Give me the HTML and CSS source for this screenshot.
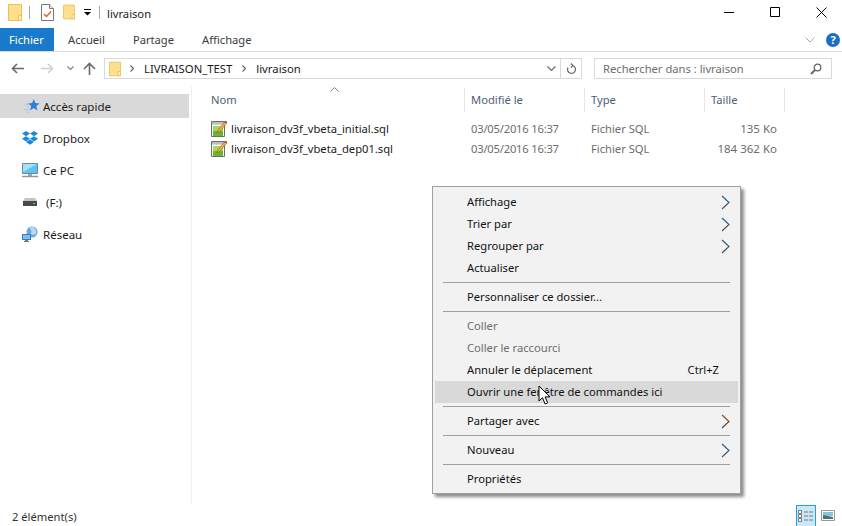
FILE: index.html
```html
<!DOCTYPE html>
<html lang="fr">
<head>
    <meta charset="UTF-8">
    <title>livraison</title>
    <link rel="stylesheet" href="styles.css">
</head>
<body>

<svg class="defs" width="0" height="0">
    <symbol id="folder" viewBox="0 0 14 17">
        <path d="M.5.5h13v16H.5z" fill="#fce08f" stroke="#e9c24f"/>
        <path d="M10.5 11.5h3v5h-3z" fill="#fdeeb8" stroke="#e9c24f"/>
    </symbol>
    <symbol id="sqlfile" viewBox="0 0 17 17">
        <path d="M.5 1.5h13v15H.5z" fill="#fff" stroke="#6d6d6d"/>
        <path d="M1 2h12v3H1z" fill="#d4d4d4"/>
        <path d="M2 2v2M4 2v2M6 2v2M8 2v2M10 2v2M12 2v2" stroke="#8a8a8a" stroke-width=".6"/>
        <path d="M2 6h10v10H2z" fill="#a6d65c"/>
        <path d="M2 11h10v5H2z" fill="#6cb52f"/>
        <path d="M6 13l1-3 6.500-8 2 1.200-6.500 8z" fill="#f2b632" stroke="#8a5a14" stroke-width=".6"/>
        <path d="M13.500 2l2 1.200.8-1.200-1.800-1.200z" fill="#b03020"/>
    </symbol>
    <symbol id="chev" viewBox="0 0 9 15">
        <path d="M1 1l7 6.500-7 6.500" fill="none" stroke="#3f5060" stroke-width="1.100"/>
        <path d="M2 1.500l6 6" fill="none" stroke="#2f86d8" stroke-width=".8"/>
    </symbol>
    <symbol id="chevor" viewBox="0 0 9 15">
        <path d="M1 1l7 6.500-7 6.500" fill="none" stroke="#4a4a4a" stroke-width="1.100"/>
        <path d="M2 1.500l6 6" fill="none" stroke="#d9701c" stroke-width=".9"/>
    </symbol>
</svg>

<div class="window">

    <!-- barre de titre -->
    <div class="titlebar">
        <svg class="qa-folder" width="14" height="17"><use href="#folder"/></svg>
        <i class="qa-sep"></i>
        <svg class="qa-doc" width="13" height="17" viewBox="0 0 13 17">
            <path d="M.5.5h8l4 4v12H.5z" fill="#fff" stroke="#777"/>
            <path d="M8.500.5v4h4" fill="#eee" stroke="#777"/>
            <path d="M3 10l2.500 2.500L10 7.500" fill="none" stroke="#e8622c" stroke-width="1.500"/>
        </svg>
        <svg class="qa-folder2" width="12" height="16"><use href="#folder"/></svg>
        <svg class="qa-drop" width="8" height="7" viewBox="0 0 8 7">
            <path d="M0 .5h7" stroke="#000"/>
            <path d="M0 3h7L3.500 6.500z" fill="#000"/>
        </svg>
        <i class="qa-sep qa-sep-2"></i>
        <span class="title-text">livraison</span>
        <div class="winbtns">
            <svg width="11" height="11" viewBox="0 0 11 11"><path d="M0 5.500h10" stroke="#000"/></svg>
            <svg width="11" height="11" viewBox="0 0 11 11"><path d="M.5.500h9v9h-9z" fill="none" stroke="#000"/></svg>
            <svg width="11" height="11" viewBox="0 0 11 11"><path d="M.5.500l10 10M10.500.500l-10 10" stroke="#000"/></svg>
        </div>
    </div>

    <!-- ruban -->
    <div class="ribbon">
        <span class="tab tab-file">Fichier</span>
        <span class="tab">Accueil</span>
        <span class="tab">Partage</span>
        <span class="tab">Affichage</span>
        <div class="ribbon-right">
            <svg width="10" height="6" viewBox="0 0 10 6"><path d="M.5.500l4.500 4.500 4.500-4.500" fill="none" stroke="#a8a8a8"/></svg>
            <span class="help">?</span>
        </div>
    </div>

    <!-- navigation -->
    <div class="navbar">
        <svg class="nav-back" width="13" height="11" viewBox="0 0 13 11"><path d="M13 5.500H2M6 1L1.500 5.500 6 10" fill="none" stroke="#6a6a6a" stroke-width="1.600"/></svg>
        <svg class="nav-fwd" width="13" height="11" viewBox="0 0 13 11"><path d="M0 5.500h11M7 1l4.500 4.500L7 10" fill="none" stroke="#cfcfcf" stroke-width="1.600"/></svg>
        <svg class="nav-down" width="7" height="5" viewBox="0 0 7 5"><path d="M.5.500l3 3 3-3" fill="none" stroke="#808080" stroke-width="1.200"/></svg>
        <svg class="nav-up" width="13" height="13" viewBox="0 0 13 13"><path d="M6.500 13V2M1 7l5.500-5.500L12 7" fill="none" stroke="#6a6a6a" stroke-width="1.600"/></svg>
        <div class="address">
            <svg class="addr-folder" width="12" height="16"><use href="#folder"/></svg>
            <svg class="crumb-arrow" width="5" height="7" viewBox="0 0 5 7"><path d="M.5.500l3 3-3 3" fill="none" stroke="#666" stroke-width="1.200"/></svg>
            <span class="crumb">LIVRAISON_TEST</span>
            <svg class="crumb-arrow" width="5" height="7" viewBox="0 0 5 7"><path d="M.5.500l3 3-3 3" fill="none" stroke="#666" stroke-width="1.200"/></svg>
            <span class="crumb">livraison</span>
            <svg class="addr-drop" width="9" height="5" viewBox="0 0 9 5"><path d="M.5.500l4 4 4-4" fill="none" stroke="#666" stroke-width="1.100"/></svg>
            <span class="addr-refresh">
                <svg width="11" height="12" viewBox="0 0 11 12"><path d="M6.500 2.500A4 4 0 1 1 2 4.500M5 .5l2 2-2 2" fill="none" stroke="#666" stroke-width="1.200"/></svg>
            </span>
        </div>
        <div class="search">
            <span>Rechercher dans : livraison</span>
            <svg width="12" height="12" viewBox="0 0 12 12"><circle cx="7.500" cy="4.500" r="3.300" fill="none" stroke="#666" stroke-width="1.300"/><path d="M5 7L1 11" stroke="#666" stroke-width="1.800"/></svg>
        </div>
    </div>

    <div class="main">
        <!-- panneau de gauche -->
        <div class="sidebar">
            <div class="side-item side-active">
                <svg width="16" height="14" viewBox="0 0 18 16">
                    <path d="M11 0l1.800 4.700 4.900.3-3.800 3.100 1.300 5.100L11 10.400l-4.200 2.800 1.300-5.100L4.300 5l4.900-.3z" fill="#2f7fd6"/>
                    <path d="M1 6h4M3 9h3M0 12h5M2 15h3" stroke="#9cc4ea"/>
                </svg>
                <span>Accès rapide</span>
            </div>
            <div class="side-item">
                <svg width="16" height="14" viewBox="0 0 16 14">
                    <path d="M4 0l4 2.600L4 5.200 0 2.600zM12 0l4 2.600-4 2.600-4-2.600zM4 5.200l4 2.600-4 2.600-4-2.600zM12 5.200l4 2.600-4 2.600-4-2.600zM4 11l4-2.400 4 2.400-4 2.800z" fill="#1a8ad8"/>
                </svg>
                <span>Dropbox</span>
            </div>
            <div class="side-item">
                <svg width="16" height="15" viewBox="0 0 16 15">
                    <path d="M.5.500h15v10H.5z" fill="#5cc4f2" stroke="#6a8aa0"/>
                    <path d="M1 1h14L1 9z" fill="#a4e2fa"/>
                    <path d="M6 11h4v2H6z" fill="#9aa8b0"/>
                    <path d="M0 13.500h16" stroke="#8a9aa4" stroke-width="1.500"/>
                </svg>
                <span>Ce PC</span>
            </div>
            <div class="side-item side-drive">
                <svg width="14" height="8" viewBox="0 0 14 8">
                    <path d="M2 0h10l2 3H0z" fill="#c4c4c4"/>
                    <path d="M0 3h14v5H0z" fill="#4a4a4a"/>
                    <path d="M10 5h2v1h-2z" fill="#4fd04f"/>
                </svg>
                <span>(F:)</span>
            </div>
            <div class="side-item">
                <svg width="16" height="16" viewBox="0 0 16 16">
                    <circle cx="10" cy="6" r="5.500" fill="#6aa6e0"/>
                    <path d="M7 2c2 1 3 3 2 5s3 2 5 1c1-3-1-7-4-7z" fill="#bcd8f2"/>
                    <path d="M0 8h9v6H0z" fill="#3a7cc0"/>
                    <path d="M1 9h7v4H1z" fill="#7cc0ea"/>
                    <path d="M3 14h3v1H3zM2 15h5v1H2z" fill="#6a7a8a"/>
                </svg>
                <span>Réseau</span>
            </div>
        </div>

        <!-- liste des fichiers -->
        <div class="content">
            <svg class="sort-arrow" width="9" height="5" viewBox="0 0 9 5"><path d="M.5 4.500l4-4 4 4" fill="none" stroke="#8a8a8a"/></svg>
            <div class="cols cols-head">
                <span>Nom</span>
                <span>Modifié le</span>
                <span>Type</span>
                <span>Taille</span>
            </div>
            <div class="files">
                <div class="cols file-row">
                    <span class="file-name"><svg width="17" height="17"><use href="#sqlfile"/></svg>livraison_dv3f_vbeta_initial.sql</span>
                    <span class="file-date">03/05/2016 16:37</span>
                    <span>Fichier SQL</span>
                    <span class="file-size">135 Ko</span>
                </div>
                <div class="cols file-row">
                    <span class="file-name"><svg width="17" height="17"><use href="#sqlfile"/></svg>livraison_dv3f_vbeta_dep01.sql</span>
                    <span class="file-date">03/05/2016 16:37</span>
                    <span>Fichier SQL</span>
                    <span class="file-size">184 362 Ko</span>
                </div>
            </div>
        </div>
    </div>

    <!-- barre d'etat -->
    <div class="statusbar">
        <span>2 élément(s)</span>
        <div class="views">
            <span class="view view-on">
                <svg width="16" height="14" viewBox="0 0 16 14">
                    <path d="M.5 1.500h3v3h-3zM.5 5.500h3v3h-3zM.5 9.500h3v3h-3z" fill="#fff" stroke="#777"/>
                    <path d="M6 3h4M11 3h4M6 7h4M11 7h4M6 11h4M11 11h4" stroke="#777"/>
                </svg>
            </span>
            <span class="view">
                <svg width="14" height="11" viewBox="0 0 14 11">
                    <path d="M.5.500h13v10H.5z" fill="#fff" stroke="#999"/>
                    <path d="M2 2h10v4H2z" fill="#8cc0dc"/>
                    <path d="M2 5l5 1 5 1v2H2z" fill="#3f7a70"/>
                </svg>
            </span>
        </div>
    </div>
</div>

<!-- menu contextuel -->
<div class="ctx">
    <div class="ctx-item">Affichage<svg width="9" height="15"><use href="#chev"/></svg></div>
    <div class="ctx-item">Trier par<svg width="9" height="15"><use href="#chev"/></svg></div>
    <div class="ctx-item">Regrouper par<svg width="9" height="15"><use href="#chev"/></svg></div>
    <div class="ctx-item">Actualiser</div>
    <div class="ctx-sep"></div>
    <div class="ctx-item">Personnaliser ce dossier...</div>
    <div class="ctx-sep"></div>
    <div class="ctx-item ctx-off">Coller</div>
    <div class="ctx-item ctx-off">Coller le raccourci</div>
    <div class="ctx-item">Annuler le déplacement<span class="ctx-key">Ctrl+Z</span></div>
    <div class="ctx-item ctx-hover">Ouvrir une fenêtre de commandes ici</div>
    <div class="ctx-sep"></div>
    <div class="ctx-item">Partager avec<svg width="9" height="15"><use href="#chevor"/></svg></div>
    <div class="ctx-sep"></div>
    <div class="ctx-item">Nouveau<svg width="9" height="15"><use href="#chev"/></svg></div>
    <div class="ctx-sep"></div>
    <div class="ctx-item">Propriétés</div>
</div>

<svg class="cursor" width="14" height="21" viewBox="0 0 14 21">
    <path d="M1 1v15l3.500-3.300 2.600 6.300 2.600-1.100-2.600-6h4.900z" fill="#fff" stroke="#000" stroke-width="1"/>
</svg>

</body>
</html>
```

FILE: styles.css
```css
/* page */
body {
    margin: 0;
    width: 842px;
    height: 526px;
    overflow: hidden;
    position: relative;
    background: #fff;
    color: #1a1a1a;
    font-family: "Noto Sans", sans-serif;
    font-size: 11.2px;
}

svg {
    flex: none;
    display: block;
}

.defs {
    position: absolute;
}

.window {
    display: flex;
    flex-direction: column;
    height: 526px;
}

/* barre de titre */
.titlebar {
    height: 28px;
    box-sizing: border-box;
    padding: 0 0 4px 8px;
    display: flex;
    align-items: center;
    flex: none;
}

.title-text {
    margin-top: 2px;
}

.qa-sep {
    width: 1px;
    height: 13px;
    background: #a8a8a8;
    margin: 0 11px 0 7px;
}

.qa-sep-2 {
    margin: 0 7px 0 7px;
}

.qa-doc {
    margin-right: 9px;
}

.qa-folder2 {
    margin-right: 9px;
}

.winbtns {
    margin-left: auto;
    display: flex;
    gap: 35px;
    padding-right: 15px;
}

/* ruban */
.ribbon {
    height: 23px;
    display: flex;
    align-items: center;
    border-bottom: 1px solid #dadbdc;
    flex: none;
}

.tab {
    padding: 0 14px;
    color: #3b3b3b;
    line-height: 23px;
}

.tab-file {
    background: #1979ca;
    color: #fff;
    width: 54px;
    box-sizing: border-box;
    padding: 0 0 0 9px;
}

.ribbon-right {
    margin-left: auto;
    display: flex;
    align-items: center;
    gap: 11px;
    padding-right: 2px;
}

.help {
    width: 14px;
    height: 14px;
    border-radius: 50%;
    background: #1a6fc4;
    color: #fff;
    font-weight: 700;
    font-size: 11px;
    line-height: 14px;
    text-align: center;
}

/* navigation */
.navbar {
    height: 34px;
    box-sizing: border-box;
    padding: 0 0 1px 11px;
    display: flex;
    align-items: center;
    flex: none;
}

.nav-fwd {
    margin-left: 17px;
}

.nav-down {
    margin-left: 13px;
}

.nav-up {
    margin-left: 9px;
}

.address {
    margin-left: 8px;
    width: 478px;
    height: 21px;
    box-sizing: border-box;
    border: 1px solid #d9d9d9;
    display: flex;
    align-items: center;
    padding-left: 4px;
}

.addr-folder {
    margin-right: 9px;
}

.crumb {
    margin: 0 10px 0 9px;
    color: #1a1a1a;
    font-size: 11.3px;
}

.addr-drop {
    margin-left: auto;
    margin-right: 4px;
}

.addr-refresh {
    width: 20px;
    height: 19px;
    border-left: 1px solid #d9d9d9;
    display: flex;
    align-items: center;
    justify-content: center;
}

.search {
    margin-left: 12px;
    width: 238px;
    height: 21px;
    box-sizing: border-box;
    border: 1px solid #d9d9d9;
    display: flex;
    align-items: center;
    justify-content: space-between;
    padding: 0 9px 0 8px;
    color: #6d6d6d;
}

/* panneau principal */
.main {
    flex: 1;
    display: flex;
    min-height: 0;
}

.sidebar {
    width: 191px;
    box-sizing: content-box;
    border-right: 1px solid #f0f0f0;
    padding-top: 8px;
    display: flex;
    flex-direction: column;
    gap: 8px;
    flex: none;
    font-size: 11.5px;
}

.side-item {
    height: 24px;
    width: 189px;
    display: flex;
    align-items: center;
    gap: 5px;
    padding-left: 22px;
    box-sizing: border-box;
}

.side-active {
    background: #d9d9d9;
    padding-left: 24px;
    gap: 3px;
}

.side-drive {
    padding-left: 23px;
    gap: 9px;
}

.content {
    flex: 1;
    position: relative;
    padding-top: 2px;
    padding-left: 13px;
}

.sort-arrow {
    position: absolute;
    left: 138px;
    top: 1px;
}

.cols {
    display: grid;
    grid-template-columns: 260px 120px 120px 80px;
}

.cols-head {
    height: 24px;
    align-items: center;
    color: #4c607a;
}

.cols-head span {
    padding-left: 6px;
    border-right: 1px solid #e5e5e5;
    line-height: 24px;
}

.files {
    padding-top: 6px;
}

.file-row {
    height: 20px;
    align-items: center;
    color: #6d6d6d;
}

.file-row span {
    padding-left: 6px;
}

.file-name {
    display: flex;
    align-items: center;
    gap: 3px;
    color: #1a1a1a;
}

.file-date {
    letter-spacing: -0.2px;
}

.file-row .file-size {
    text-align: right;
    padding-right: 8px;
    font-size: 11.5px;
}

/* barre d'etat */
.statusbar {
    height: 22px;
    flex: none;
    display: flex;
    align-items: center;
    justify-content: space-between;
    padding-left: 12px;
    color: #333;
}

.statusbar > span {
    margin-top: 2px;
}

.views {
    display: flex;
    align-items: center;
    gap: 3px;
    padding-right: 5px;
}

.view {
    width: 18px;
    height: 21px;
    display: flex;
    align-items: center;
    justify-content: center;
}

.view-on {
    background: #cce8f8;
    border: 1px solid #26a0da;
    border-bottom: 0;
    height: 20px;
}

/* menu contextuel */
.ctx {
    position: absolute;
    left: 432px;
    top: 186px;
    width: 309px;
    height: 308px;
    box-sizing: border-box;
    background: #f2f2f2;
    border: 1px solid #a0a0a0;
    padding: 4px 2px;
    box-shadow: 3px 3px 3px rgba(0, 0, 0, 0.45);
    color: #111;
}

.ctx-item {
    height: 22px;
    line-height: 22px;
    padding-left: 32px;
    padding-right: 8px;
    display: flex;
    align-items: center;
    justify-content: space-between;
}

.ctx-off {
    color: #6d6d6d;
}

.ctx-hover {
    background: #d9d9d9;
}

.ctx-key {
    margin-right: 11px;
}

.ctx-sep {
    height: 7px;
    margin: 0 8px;
    position: relative;
}

.ctx-sep::after {
    content: '';
    position: absolute;
    left: 0;
    right: 0;
    top: 3px;
    height: 1px;
    background: #a0a0a0;
}

.cursor {
    position: absolute;
    left: 538px;
    top: 385px;
}
```
